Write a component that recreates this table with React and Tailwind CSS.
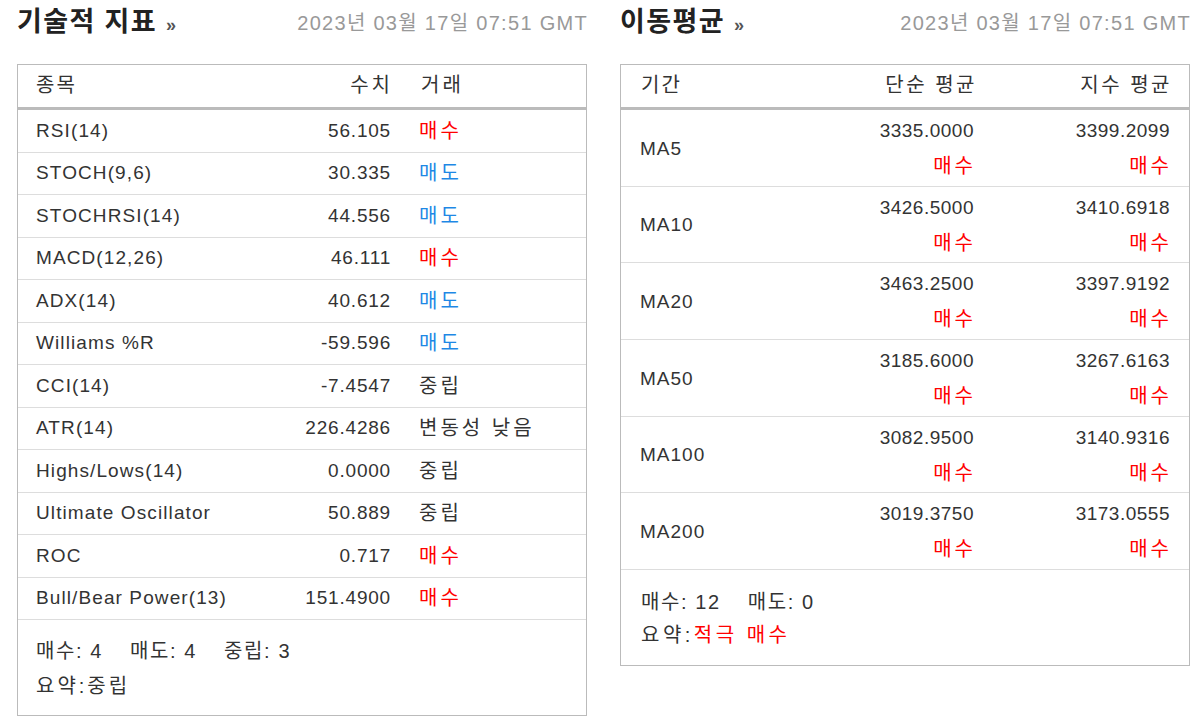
const FONT = { fontFamily: '"Liberation Sans", "Noto Sans CJK KR", sans-serif' };

const indicators = [
  { name: "RSI(14)", value: "56.105", action: "매수" },
  { name: "STOCH(9,6)", value: "30.335", action: "매도" },
  { name: "STOCHRSI(14)", value: "44.556", action: "매도" },
  { name: "MACD(12,26)", value: "46.111", action: "매수" },
  { name: "ADX(14)", value: "40.612", action: "매도" },
  { name: "Williams %R", value: "-59.596", action: "매도" },
  { name: "CCI(14)", value: "-7.4547", action: "중립" },
  { name: "ATR(14)", value: "226.4286", action: "변동성 낮음" },
  { name: "Highs/Lows(14)", value: "0.0000", action: "중립" },
  { name: "Ultimate Oscillator", value: "50.889", action: "중립" },
  { name: "ROC", value: "0.717", action: "매수" },
  { name: "Bull/Bear Power(13)", value: "151.4900", action: "매수" },
];

const averages = [
  { period: "MA5", simple: "3335.0000", exp: "3399.2099" },
  { period: "MA10", simple: "3426.5000", exp: "3410.6918" },
  { period: "MA20", simple: "3463.2500", exp: "3397.9192" },
  { period: "MA50", simple: "3185.6000", exp: "3267.6163" },
  { period: "MA100", simple: "3082.9500", exp: "3140.9316" },
  { period: "MA200", simple: "3019.3750", exp: "3173.0555" },
];

const actionColor = (a) => {
  if (a === "매수") return "text-[#ff0000]";
  if (a === "매도") return "text-[#1e88e5]";
  return "text-[#333]";
};

const Heading = ({ title }) => (
  <div className="flex items-center justify-between h-[45px]">
    <h2 className="text-[27px] font-bold text-[#222] tracking-[1.4px]">
      {title} <span className="text-[18px] text-[#555]">»</span>
    </h2>
    <span className="text-[20px] text-[#999] tracking-[1.3px] -mr-[1px]">
      2023년 03월 17일 07:51 GMT
    </span>
  </div>
);

const App = () => {
  return (
    <div className="bg-white w-[1199px] h-[717px] text-[#333]" style={FONT}>
      <div className="flex gap-[33px] pl-[17px] items-start">
        {/* 기술적 지표 */}
        <div className="w-[570px] shrink-0">
          <Heading title="기술적 지표" />
          <div className="mt-[19px] border border-[#bbb] text-[19px]">
            <div className="flex items-center h-[45px] pb-[3px] border-b-[3px] border-[#bbb] pl-[18px]">
              <span className="flex-1 text-[20px] tracking-[2px]">종목</span>
              <span className="w-[100px] text-right text-[20px] tracking-[3px] -mr-[3px]">수치</span>
              <span className="w-[196px] pl-[31px] text-[20px] tracking-[3px]">거래</span>
            </div>
            {indicators.map((row) => (
              <div
                key={row.name}
                className="flex items-center h-[42.5px] border-b border-[#ddd] pl-[18px]"
              >
                <span className="flex-1 tracking-[1.1px]">{row.name}</span>
                <span className="w-[100px] text-right tracking-[0.8px] -mr-[1px]">{row.value}</span>
                <span className={`w-[196px] pl-[29px] text-[20px] tracking-[3px] ${actionColor(row.action)}`}>
                  {row.action}
                </span>
              </div>
            ))}
            <div className="px-[18px] pt-[14px] h-[95px] text-[20px] tracking-[1.6px]">
              <div className="flex gap-[27px] h-[34px] items-center">
                <span>매수: 4</span>
                <span>매도: 4</span>
                <span>중립: 3</span>
              </div>
              <div className="h-[35px] flex items-center tracking-[3px]">요약:중립</div>
            </div>
          </div>
        </div>

        {/* 이동평균 */}
        <div className="w-[570px] shrink-0">
          <Heading title="이동평균" />
          <div className="mt-[19px] border border-[#bbb] text-[19px]">
            <div className="flex items-center h-[45px] pb-[3px] border-b-[3px] border-[#bbb] px-[20px]">
              <span className="flex-1 text-[20px] tracking-[2px]">기간</span>
              <span className="w-[200px] text-right text-[20px] tracking-[2.5px] -mr-[2px]">단순 평균</span>
              <span className="w-[197px] text-right text-[20px] tracking-[2.5px] -mr-[3px]">지수 평균</span>
            </div>
            {averages.map((row) => (
              <div
                key={row.period}
                className="flex items-center h-[76.7px] border-b border-[#ddd] px-[20px]"
              >
                <span className="flex-1 pt-[2px] tracking-[1px] -ml-[1px]">{row.period}</span>
                <div className="w-[200px] text-right flex flex-col tracking-[0.5px] -mr-[1px]">
                  <span className="leading-[36px]">{row.simple}</span>
                  <span className="leading-[34px] text-[20px] text-[#ff0000] tracking-[3px] -mr-[2px]">매수</span>
                </div>
                <div className="w-[197px] text-right flex flex-col tracking-[0.5px] -mr-[1px]">
                  <span className="leading-[36px]">{row.exp}</span>
                  <span className="leading-[34px] text-[20px] text-[#ff0000] tracking-[3px] -mr-[2px]">매수</span>
                </div>
              </div>
            ))}
            <div className="px-[20px] pt-[15px] h-[95px] text-[20px] tracking-[1.6px]">
              <div className="flex gap-[27px] h-[34px] items-center">
                <span>매수: 12</span>
                <span>매도: 0</span>
              </div>
              <div className="h-[32px] flex items-center tracking-[3.5px]">
                요약:<span className="text-[#ff0000]">적극 매수</span>
              </div>
            </div>
          </div>
        </div>
      </div>
    </div>
  );
};

export default App;
